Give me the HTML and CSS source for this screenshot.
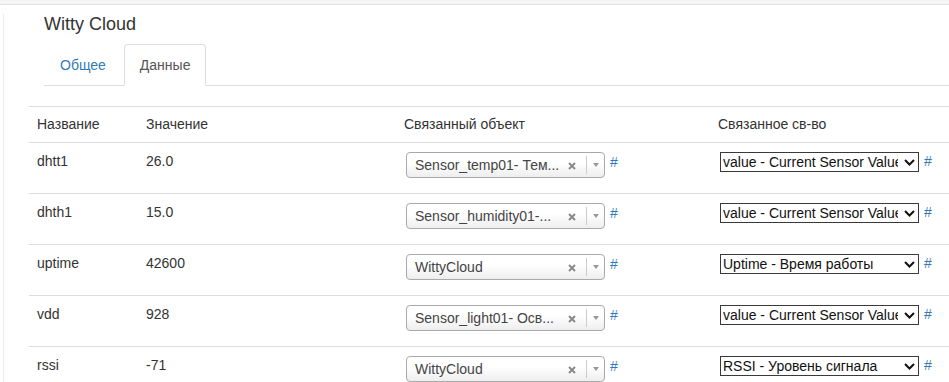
FILE: index.html
```html
<!DOCTYPE html>
<html lang="ru">
<head>
  <meta charset="UTF-8">
  <title>Witty Cloud</title>
  <link rel="stylesheet" href="styles.css">
</head>
<body>
  <div class="topbar"></div>

  <div class="panel">
    <h2 class="panel-title">Witty Cloud</h2>

    <ul class="nav-tabs">
      <li><a href="#">Общее</a></li>
      <li class="active"><a href="#">Данные</a></li>
    </ul>

    <table class="data-table">
      <colgroup>
        <col class="c-name">
        <col class="c-value">
        <col class="c-object">
        <col class="c-prop">
      </colgroup>
      <thead>
        <tr>
          <th>Название</th>
          <th>Значение</th>
          <th>Связанный объект</th>
          <th>Связанное св-во</th>
        </tr>
      </thead>
      <tbody>
        <tr>
          <td>dhtt1</td>
          <td>26.0</td>
          <td>
            <div class="link-cell">
              <div class="s2">
                <span class="s2-text">Sensor_temp01- Тем...</span>
                <span class="s2-clear"><svg width="8" height="8" viewBox="0 0 8 8"><path d="M1 1L7 7M7 1L1 7" stroke="#8a8a8a" stroke-width="2"/></svg></span>
                <span class="s2-arrow"><span class="s2-caret"></span></span>
              </div>
              <a class="hash s2-hash" href="#">#</a>
            </div>
          </td>
          <td>
            <div class="link-cell">
              <div class="sel-wrap">
                <select><option>value - Current Sensor Value</option></select>
                <svg class="chev" width="11" height="7" viewBox="0 0 11 7"><path d="M1 1L5.5 5.5L10 1" fill="none" stroke="#111" stroke-width="2"/></svg>
              </div>
              <a class="hash" href="#">#</a>
            </div>
          </td>
        </tr>
        <tr>
          <td>dhth1</td>
          <td>15.0</td>
          <td>
            <div class="link-cell">
              <div class="s2">
                <span class="s2-text">Sensor_humidity01-...</span>
                <span class="s2-clear"><svg width="8" height="8" viewBox="0 0 8 8"><path d="M1 1L7 7M7 1L1 7" stroke="#8a8a8a" stroke-width="2"/></svg></span>
                <span class="s2-arrow"><span class="s2-caret"></span></span>
              </div>
              <a class="hash s2-hash" href="#">#</a>
            </div>
          </td>
          <td>
            <div class="link-cell">
              <div class="sel-wrap">
                <select><option>value - Current Sensor Value</option></select>
                <svg class="chev" width="11" height="7" viewBox="0 0 11 7"><path d="M1 1L5.5 5.5L10 1" fill="none" stroke="#111" stroke-width="2"/></svg>
              </div>
              <a class="hash" href="#">#</a>
            </div>
          </td>
        </tr>
        <tr>
          <td>uptime</td>
          <td>42600</td>
          <td>
            <div class="link-cell">
              <div class="s2">
                <span class="s2-text">WittyCloud</span>
                <span class="s2-clear"><svg width="8" height="8" viewBox="0 0 8 8"><path d="M1 1L7 7M7 1L1 7" stroke="#8a8a8a" stroke-width="2"/></svg></span>
                <span class="s2-arrow"><span class="s2-caret"></span></span>
              </div>
              <a class="hash s2-hash" href="#">#</a>
            </div>
          </td>
          <td>
            <div class="link-cell">
              <div class="sel-wrap">
                <select><option>Uptime - Время работы</option></select>
                <svg class="chev" width="11" height="7" viewBox="0 0 11 7"><path d="M1 1L5.5 5.5L10 1" fill="none" stroke="#111" stroke-width="2"/></svg>
              </div>
              <a class="hash" href="#">#</a>
            </div>
          </td>
        </tr>
        <tr>
          <td>vdd</td>
          <td>928</td>
          <td>
            <div class="link-cell">
              <div class="s2">
                <span class="s2-text">Sensor_light01- Осв...</span>
                <span class="s2-clear"><svg width="8" height="8" viewBox="0 0 8 8"><path d="M1 1L7 7M7 1L1 7" stroke="#8a8a8a" stroke-width="2"/></svg></span>
                <span class="s2-arrow"><span class="s2-caret"></span></span>
              </div>
              <a class="hash s2-hash" href="#">#</a>
            </div>
          </td>
          <td>
            <div class="link-cell">
              <div class="sel-wrap">
                <select><option>value - Current Sensor Value</option></select>
                <svg class="chev" width="11" height="7" viewBox="0 0 11 7"><path d="M1 1L5.5 5.5L10 1" fill="none" stroke="#111" stroke-width="2"/></svg>
              </div>
              <a class="hash" href="#">#</a>
            </div>
          </td>
        </tr>
        <tr>
          <td>rssi</td>
          <td>-71</td>
          <td>
            <div class="link-cell">
              <div class="s2">
                <span class="s2-text">WittyCloud</span>
                <span class="s2-clear"><svg width="8" height="8" viewBox="0 0 8 8"><path d="M1 1L7 7M7 1L1 7" stroke="#8a8a8a" stroke-width="2"/></svg></span>
                <span class="s2-arrow"><span class="s2-caret"></span></span>
              </div>
              <a class="hash s2-hash" href="#">#</a>
            </div>
          </td>
          <td>
            <div class="link-cell">
              <div class="sel-wrap">
                <select><option>RSSI - Уровень сигнала</option></select>
                <svg class="chev" width="11" height="7" viewBox="0 0 11 7"><path d="M1 1L5.5 5.5L10 1" fill="none" stroke="#111" stroke-width="2"/></svg>
              </div>
              <a class="hash" href="#">#</a>
            </div>
          </td>
        </tr>
      </tbody>
    </table>
  </div>
</body>
</html>
```

FILE: styles.css
```css
html, body {
  margin: 0;
  padding: 0;
  background-color: #fff;
  overflow: hidden;
}

body {
  font-family: "Liberation Sans", Arial, sans-serif;
  font-size: 14px;
  line-height: 20px;
  color: #333;
}

.topbar {
  height: 4px;
  background-color: #f5f5f5;
  border-bottom: 1px solid #e3e3e3;
}

.panel {
  margin-left: 3px;
  border-left: 1px solid #ececec;
  height: 377px;
}

.panel-title {
  margin: 9px 0 10px 40px;
  font-size: 18px;
  font-weight: normal;
  line-height: 20px;
  color: #333;
}

/* tabs */
.nav-tabs {
  list-style: none;
  margin: 0 0 20px 40px;
  padding: 0;
  display: flex;
  border-bottom: 1px solid #ddd;
}

.nav-tabs li {
  margin-right: 2px;
  margin-bottom: -1px;
}

.nav-tabs a {
  display: block;
  padding: 10px 15px;
  border: 1px solid transparent;
  border-radius: 4px 4px 0 0;
  color: #337ab7;
  text-decoration: none;
}

.nav-tabs li.active a {
  color: #555;
  background-color: #fff;
  border-color: #ddd #ddd transparent;
}

/* table */
.data-table {
  margin-left: 25px;
  width: 920px;
  table-layout: fixed;
  border-collapse: collapse;
  border-top: 1px solid #ddd;
}

.c-name { width: 109px; }
.c-value { width: 258px; }
.c-object { width: 314px; }

.data-table th {
  text-align: left;
  font-weight: normal;
  padding: 7px 8px 8px;
  border-bottom: 1px solid #ddd;
}

.data-table td {
  padding: 8px;
  vertical-align: top;
  border-top: 1px solid #ddd;
  height: 34px;
  box-sizing: content-box;
}

.link-cell {
  display: flex;
  align-items: flex-start;
}

.hash {
  color: #337ab7;
  text-decoration: none;
  margin-left: 5px;
}

.s2-hash {
  margin-top: 1px;
}

/* select2-like combobox */
.s2 {
  display: flex;
  align-items: center;
  box-sizing: border-box;
  width: 199px;
  height: 26px;
  margin: 1px 0 0 2px;
  border: 1px solid #aaa;
  border-radius: 4px;
  background: linear-gradient(#fff 40%, #eee);
  color: #444;
  font-size: 14px;
}

.s2-text {
  flex: 1;
  padding-left: 8px;
  white-space: nowrap;
  overflow: hidden;
}

.s2-clear {
  display: flex;
  margin: 2px 10px 0 0;
}

.s2-arrow {
  align-self: stretch;
  width: 17px;
  margin: 3px 0;
  border-left: 1px solid #ccc;
  display: flex;
  align-items: center;
  justify-content: center;
}

.s2-caret {
  width: 0;
  height: 0;
  border-left: 3px solid transparent;
  border-right: 3px solid transparent;
  border-top: 4px solid #999;
}

/* native select */
.sel-wrap {
  position: relative;
  margin: 1px 0 0 2px;
}

.sel-wrap select {
  appearance: none;
  -webkit-appearance: none;
  box-sizing: border-box;
  width: 199px;
  height: 20px;
  margin: 0;
  padding: 0 20px 0 2px;
  border: 1px solid #3a3a3a;
  border-radius: 0;
  background-color: #fff;
  color: #111;
  font-family: "Liberation Sans", Arial, sans-serif;
  font-size: 14px;
  line-height: 18px;
}

.chev {
  position: absolute;
  right: 4px;
  top: 7px;
  pointer-events: none;
}
```
